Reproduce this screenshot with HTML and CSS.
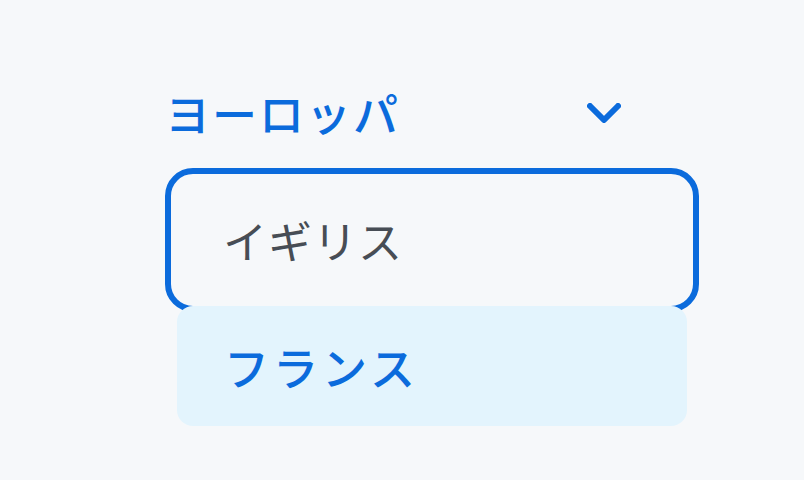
FILE: index.html
```html
<!DOCTYPE html>
<html lang="ja">
<head>
<meta charset="utf-8">
<link rel="stylesheet" href="styles.css">
</head>
<body>
<div class="picker">
  <div class="header">
    <span class="group">ヨーロッパ</span>
    <svg class="chevron" width="34" height="20" viewBox="0 0 34 20"><path d="M3 3 L17 17 L31 3" fill="none" stroke="#0b6bdc" stroke-width="6" stroke-linecap="round" stroke-linejoin="round"/></svg>
  </div>
  <ul class="list">
    <li class="item focused">イギリス</li>
    <li class="item selected">フランス</li>
  </ul>
</div>
</body>
</html>
```

FILE: styles.css
```css
html, body {
  margin: 0;
  padding: 0;
  background: #f6f8fa;
  font-family: "Noto Sans CJK JP", "Noto Sans", sans-serif;
}
.picker {
  width: 534px;
  margin-left: 165px;
  padding-top: 84px;
}
.header {
  height: 56px;
  display: flex;
  align-items: center;
  padding-right: 78px;
  justify-content: space-between;
}
.group {
  color: #0b6bdc;
  font-size: 45px;
  font-weight: 500;
  letter-spacing: 2px;
  line-height: 1;
}
.chevron {
  display: block;
  margin-top: 2px;
}
.list {
  list-style: none;
  margin: 40px 0 0 0;
  padding: 0 12px;
  display: flex;
  flex-direction: column;
  gap: 6px;
}
.item {
  height: 120px;
  border-radius: 16px;
  display: flex;
  align-items: center;
  padding-left: 46px;
  font-size: 44px;
  line-height: 1;
}
.focused {
  color: #474d55;
  outline: 6px solid #0b6bdc;
  outline-offset: 6px;
  letter-spacing: 1px;
}
.selected {
  background: #e3f4fd;
  color: #0b6bdc;
  font-weight: 500;
  font-size: 45px;
  letter-spacing: 4px;
  padding-left: 47px;
}
```
